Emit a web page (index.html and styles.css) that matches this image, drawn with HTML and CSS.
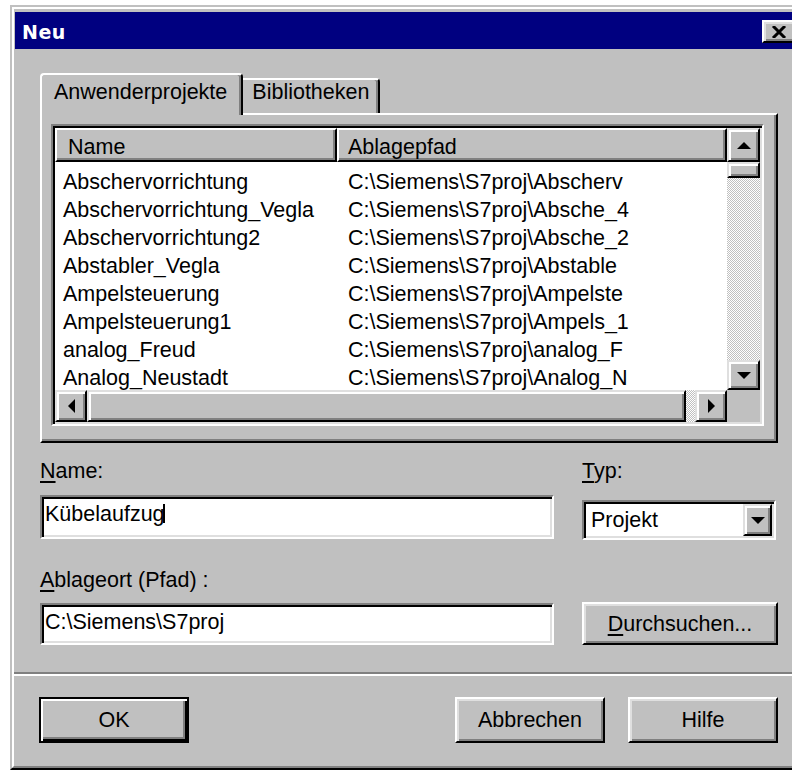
FILE: index.html
```html
<!DOCTYPE html>
<html lang="de">
<head>
<meta charset="utf-8">
<title>Neu</title>
<link rel="stylesheet" href="styles.css">
</head>
<body>
<div class="window">
  <div class="window-inner">
    <div class="titlebar">
      <span class="title">Neu</span>
      <div class="close"><svg width="16" height="12" viewBox="0 0 16 12"><path d="M2 0 L14 12 M14 0 L2 12" stroke="#000" stroke-width="3" fill="none"/></svg></div>
    </div>
    <div class="content">
      <div class="tabs">
        <div class="tab active">Anwenderprojekte</div>
        <div class="tab other">Bibliotheken</div>
      </div>
      <div class="panel">
        <div class="listview">
          <div class="lv-main">
            <div class="lv-header">
              <div class="hcell name">Name</div>
              <div class="hcell path">Ablagepfad</div>
            </div>
            <div class="lv-rows">
              <div class="row"><span>Abschervorrichtung</span><span>C:\Siemens\S7proj\Abscherv</span></div>
              <div class="row"><span>Abschervorrichtung_Vegla</span><span>C:\Siemens\S7proj\Absche_4</span></div>
              <div class="row"><span>Abschervorrichtung2</span><span>C:\Siemens\S7proj\Absche_2</span></div>
              <div class="row"><span>Abstabler_Vegla</span><span>C:\Siemens\S7proj\Abstable</span></div>
              <div class="row"><span>Ampelsteuerung</span><span>C:\Siemens\S7proj\Ampelste</span></div>
              <div class="row"><span>Ampelsteuerung1</span><span>C:\Siemens\S7proj\Ampels_1</span></div>
              <div class="row"><span>analog_Freud</span><span>C:\Siemens\S7proj\analog_F</span></div>
              <div class="row"><span>Analog_Neustadt</span><span>C:\Siemens\S7proj\Analog_N</span></div>
            </div>
          </div>
          <div class="vscroll">
            <div class="sb-btn up"><svg width="14" height="7" viewBox="0 0 14 7"><path d="M7 0 L14 7 L0 7 Z"/></svg></div>
            <div class="sb-btn vthumb"></div>
            <div class="track"></div>
            <div class="sb-btn down"><svg width="14" height="7" viewBox="0 0 14 7"><path d="M0 0 L14 0 L7 7 Z"/></svg></div>
          </div>
          <div class="hscroll">
            <div class="sb-btn left"><svg width="7" height="14" viewBox="0 0 7 14"><path d="M0 7 L7 0 L7 14 Z"/></svg></div>
            <div class="sb-btn hthumb"></div>
            <div class="track"></div>
            <div class="sb-btn right"><svg width="7" height="14" viewBox="0 0 7 14"><path d="M0 0 L7 7 L0 14 Z"/></svg></div>
          </div>
          <div class="corner"></div>
        </div>
      </div>

      <div class="form">
        <div class="label"><u>N</u>ame:</div>
        <div class="label"><u>T</u>yp:</div>
        <div class="field name-field">Kübelaufzug<span class="caret"></span></div>
        <div class="combo">
          <span class="combo-text">Projekt</span>
          <span class="combo-btn"><svg width="14" height="7" viewBox="0 0 14 7"><path d="M0 0 L14 0 L7 7 Z"/></svg></span>
        </div>
        <div class="label label-path"><u>A</u>blageort (Pfad) :</div>
        <div></div>
        <div class="field path-field">C:\Siemens\S7proj</div>
        <div class="btn browse"><span><u>D</u>urchsuchen...</span></div>
      </div>

      <div class="separator"></div>

      <div class="buttons">
        <div class="btn btn-ok">OK</div>
        <div class="btn btn-cancel">Abbrechen</div>
        <div class="btn btn-help">Hilfe</div>
      </div>
    </div>
  </div>
</div>
</body>
</html>
```

FILE: styles.css
```css
* { box-sizing: border-box; }

html, body { margin: 0; height: 100%; }

body {
  background: #fff;
  overflow: hidden;
  font-family: "Liberation Sans", Arial, sans-serif;
  font-size: 21.5px;
  color: #000;
}

u {
  text-decoration-thickness: 2px;
  text-underline-offset: 3px;
}

/* window frame */
.window {
  margin: 5px 0 0 10px;
  width: 798px;
  height: 765px;
  background: #c0c0c0;
  border: 2px solid;
  border-color: #c0c0c0 #000 #000 #c0c0c0;
}

.window-inner {
  height: 100%;
  border: 2px solid;
  border-color: #fff #808080 #808080 #fff;
  padding: 3px 2px 2px 1px;
  display: flex;
  flex-direction: column;
}

.titlebar {
  flex: none;
  height: 37px;
  background: #000080;
  display: flex;
  align-items: flex-start;
  padding-left: 7px;
}

.title {
  font-family: "DejaVu Sans", sans-serif;
  font-weight: bold;
  font-size: 19px;
  letter-spacing: 0.5px;
  line-height: 20px;
  color: #fff;
  margin-top: 10px;
}

.close {
  margin-left: auto;
  margin-right: 6px;
  margin-top: 8px;
  width: 34px;
  height: 23px;
  background: #c0c0c0;
  border: 2px solid;
  border-color: #fff #000 #000 #fff;
  box-shadow: inset 2px 2px #dfdfdf, inset -2px -2px #808080;
  display: flex;
  align-items: center;
  justify-content: center;
}

.content {
  flex: 1;
  display: flex;
  flex-direction: column;
  padding: 0 24px 0 25px;
}

/* tabs */
.tabs {
  display: flex;
  align-items: flex-end;
  height: 40px;
  margin-top: 24px;
}

.tab {
  background: #c0c0c0;
  border-top: 2px solid #fff;
  border-right: 2px solid #000;
  box-shadow: inset -2px 0 #808080;
  line-height: 24px;
  white-space: nowrap;
}

.tab.active {
  position: relative;
  z-index: 1;
  height: 42px;
  margin-bottom: -2px;
  border-left: 2px solid #fff;
  border-radius: 4px 4px 0 0;
  padding: 5px 14px 0 12px;
}

.tab.other {
  height: 35px;
  border-radius: 0 4px 0 0;
  padding: 0 9px;
}

.panel {
  height: 330px;
  background: #c0c0c0;
  border: 2px solid;
  border-color: #fff #000 #000 #fff;
  box-shadow: inset -2px -2px #808080;
  padding: 9px 12px 15px 9px;
}

/* list view */
.listview {
  height: 100%;
  border: 2px solid;
  border-color: #808080 #fff #fff #808080;
  padding: 2px;
  box-shadow: inset 2px 2px #000, inset -2px -2px #dfdfdf;
  background: #c0c0c0;
  display: grid;
  grid-template-columns: 1fr 33px;
  grid-template-rows: 1fr 32px;
}

.lv-main {
  background: #fff;
  overflow: hidden;
  min-height: 0;
  min-width: 0;
}

.lv-header {
  display: grid;
  grid-template-columns: 282px 1fr;
  height: 34px;
}

.hcell {
  background: #c0c0c0;
  border: 2px solid;
  border-color: #fff #000 #000 #fff;
  box-shadow: inset -2px -2px #808080;
  line-height: 28px;
  padding-top: 3px;
  white-space: nowrap;
  overflow: hidden;
}

.hcell.name { padding-left: 11px; }
.hcell.path { padding-left: 9px; }

.lv-rows { padding-top: 6px; }

.row {
  display: grid;
  grid-template-columns: 282px 1fr;
  line-height: 28px;
  white-space: nowrap;
}

.row span { overflow: hidden; }
.row span:first-child { padding-left: 8px; }
.row span:last-child { padding-left: 11px; }

/* scroll bars */
.sb-btn {
  flex: none;
  background: #c0c0c0;
  border: 2px solid;
  border-color: #dfdfdf #000 #000 #dfdfdf;
  box-shadow: inset 2px 2px #fff, inset -2px -2px #808080;
  display: flex;
  align-items: center;
  justify-content: center;
}

.sb-btn svg { fill: #000; }

.track {
  flex: 1;
  background: repeating-conic-gradient(#c0c0c0 0% 25%, #fff 0% 50%) 0 0 / 2px 2px;
}

.vscroll {
  display: flex;
  flex-direction: column;
  min-height: 0;
}

.vscroll .up { height: 34px; }
.vscroll .vthumb { height: 16px; }
.vscroll .down { height: 30px; }

.hscroll {
  display: flex;
  min-width: 0;
}

.hscroll .left,
.hscroll .right { width: 32px; }
.hscroll .hthumb { width: 599px; }

.corner { background: #c0c0c0; }

/* form fields */
.form {
  display: grid;
  grid-template-columns: 514px 1fr;
  column-gap: 28px;
  margin-top: 14px;
  align-items: start;
}

.label {
  line-height: 28px;
  white-space: nowrap;
}

.label-path { margin-top: 26px; }

.field {
  background: #fff;
  border: 2px solid;
  border-color: #808080 #fff #fff #808080;
  box-shadow: inset 2px 2px #000, inset -2px -2px #dfdfdf;
  padding: 3px 3px 0 3px;
  line-height: 28px;
  white-space: nowrap;
  overflow: hidden;
}

.name-field { margin-top: 10px; height: 44px; }
.path-field { margin-top: 9px; height: 42px; }

.caret {
  display: inline-block;
  width: 2px;
  height: 19px;
  margin-left: -2px;
  vertical-align: -2px;
  background: #000;
}

.combo {
  margin-top: 15px;
  width: 194px;
  height: 40px;
  display: flex;
  background: #fff;
  border: 2px solid;
  border-color: #808080 #fff #fff #808080;
  box-shadow: inset 2px 2px #000, inset -2px -2px #dfdfdf;
  padding: 2px;
}

.combo-text {
  flex: 1;
  padding: 2px 0 0 5px;
  line-height: 28px;
}

.combo-btn {
  width: 29px;
  background: #c0c0c0;
  border: 2px solid;
  border-color: #dfdfdf #000 #000 #dfdfdf;
  box-shadow: inset 2px 2px #fff, inset -2px -2px #808080;
  display: flex;
  align-items: center;
  justify-content: center;
}

/* push buttons */
.btn {
  background: #c0c0c0;
  border: 2px solid;
  border-color: #fff #000 #000 #fff;
  box-shadow: inset 2px 2px #dfdfdf, inset -2px -2px #808080;
  display: flex;
  align-items: center;
  justify-content: center;
  line-height: 28px;
  white-space: nowrap;
}

.browse {
  margin-top: 8px;
  height: 43px;
}

.separator {
  margin: 27px -24px 0 -26px;
  height: 4px;
  border-top: 2px solid #808080;
  border-bottom: 2px solid #fff;
}

.buttons {
  display: flex;
  margin-top: 21px;
}

.buttons .btn {
  width: 150px;
  height: 46px;
}

.btn-ok {
  margin-left: -1px;
  border-color: #000;
  box-shadow: inset 2px 2px #fff, inset -2px -2px #000, inset -4px -4px #808080;
}

.btn-cancel { margin-left: auto; }
.btn-help { margin-left: 23px; }
```
